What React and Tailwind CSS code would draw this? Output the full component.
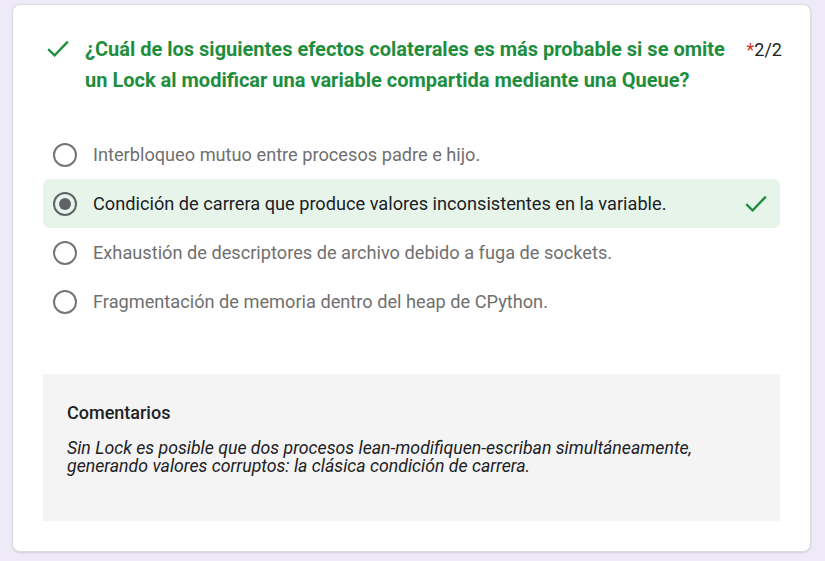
const options = [
  { text: 'Interbloqueo mutuo entre procesos padre e hijo.' },
  { text: 'Condición de carrera que produce valores inconsistentes en la variable.', selected: true, correct: true },
  { text: 'Exhaustión de descriptores de archivo debido a fuga de sockets.' },
  { text: 'Fragmentación de memoria dentro del heap de CPython.' },
]

const CheckMark = ({ className = '' }) => (
  <svg viewBox="0 0 22 17" className={`h-[17px] w-[22px] shrink-0 ${className}`} fill="none">
    <path d="M1.2 9.2 L7.6 15.4 L20.8 1.6" stroke="#1e8e3e" strokeWidth="2.3" />
  </svg>
)

const Radio = ({ checked }) => (
  <div
    className={`flex h-[24px] w-[24px] shrink-0 items-center justify-center rounded-full border-[2.5px] ${
      checked ? 'border-[#5f6368]' : 'border-[#757575]'
    }`}
  >
    {checked && <div className="h-[12px] w-[12px] rounded-full bg-[#5f6368]" />}
  </div>
)

export default function App() {
  return (
    <div className="min-h-[561px] w-full bg-[#eeeaf8] pl-[12px] pr-[14px] pt-[4px] pb-[10px] font-['Roboto',sans-serif]">
      <div className="rounded-[8px] border border-[#dadce0] bg-white pt-[29px] pb-[30px] shadow-[0_1px_2px_rgba(60,64,67,0.15)]">
        <div className="flex items-start pl-[34px] pr-[28px]">
          <CheckMark className="mt-[6px]" />
          <h2 className="ml-[16px] flex-1 text-[20px] font-bold leading-[31px] text-[#1e8e3e]">
            ¿Cuál de los siguientes efectos colaterales es más probable si se omite un Lock al modificar una variable compartida mediante una Queue?
          </h2>
          <div className="ml-[12px] shrink-0 text-[18px] leading-[31px] text-[#202124]">
            <span className="text-[#d93025]">*</span>2/2
          </div>
        </div>

        <div className="mt-[34px] flex flex-col px-[30px]">
          {options.map((o, i) => (
            <div
              key={i}
              className={`flex h-[49px] items-center rounded-[6px] pl-[10px] pr-[13px] ${o.selected ? 'bg-[#e6f4ea]' : ''}`}
            >
              <Radio checked={o.selected} />
              <span className={`ml-[16px] flex-1 text-[18.2px] ${o.selected ? 'text-[#202124]' : 'text-[#6f6f6f]'}`}>
                {o.text}
              </span>
              {o.correct && <CheckMark />}
            </div>
          ))}
        </div>

        <div className="mx-[30px] mt-[48px] bg-[#f4f4f4] px-[24px] pt-[27px] pb-[46px] text-[#202124]">
          <div className="text-[18px] font-medium leading-[24px]">Comentarios</div>
          <p className="mt-[14px] text-[17.7px] italic leading-[18px]">
            Sin Lock es posible que dos procesos lean-modifiquen-escriban simultáneamente,
            <br />
            generando valores corruptos: la clásica condición de carrera.
          </p>
        </div>
      </div>
    </div>
  )
}
